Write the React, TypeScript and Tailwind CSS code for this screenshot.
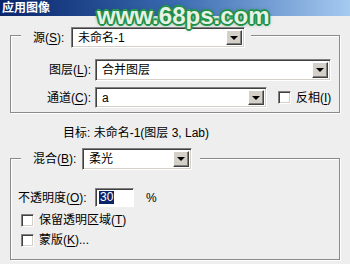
import React from "react";

const font = "font-['Liberation_Sans','Noto_Sans_CJK_SC',sans-serif]";

function U({ children }: { children: React.ReactNode }) {
  return <span className="underline underline-offset-[2px]">{children}</span>;
}

function DropButton() {
  return (
    <div className="w-[16px] h-full flex items-center justify-center bg-[#d4d0c8] border border-t-white border-l-white border-r-[#404040] border-b-[#404040] shadow-[inset_-1px_-1px_0_#808080]">
      <div className="w-0 h-0 border-l-[4px] border-r-[4px] border-t-[4px] border-l-transparent border-r-transparent border-t-black" />
    </div>
  );
}

function Select({ value, width, height = 21 }: { value: string; width: string; height?: number }) {
  return (
    <div
      className={`${width} flex items-stretch bg-white border border-t-[#808080] border-l-[#808080] border-r-white border-b-white shadow-[inset_1px_1px_0_#404040,inset_-1px_-1px_0_#d4d0c8] p-[2px]`}
      style={{ height }}
    >
      <div className="flex-1 flex items-center pl-[4px] text-[12px] text-black">{value}</div>
      <DropButton />
    </div>
  );
}

function Checkbox() {
  return (
    <div className="w-[13px] h-[13px] bg-white border border-t-[#808080] border-l-[#808080] border-r-white border-b-white shadow-[inset_1px_1px_0_#404040,inset_-1px_-1px_0_#d4d0c8]" />
  );
}

// etched group box border
const groupBox =
  "mx-[10px] w-[330px] border border-[#8a8a8a] shadow-[inset_1px_1px_0_#fff,1px_1px_0_#fff]";

export default function App() {
  return (
    <div className={`${font} relative w-[350px] h-[264px] overflow-hidden bg-[#eeeeee] text-[12px] text-black`}>
      {/* title bar */}
      <div className="h-[16px] bg-gradient-to-r from-[#0a246a] via-[#3a6ab0] to-[#a6caf0] pl-[2px] text-white font-bold text-[12px] leading-[16px]">
        应用图像
      </div>

      {/* source group */}
      <div className={`${groupBox} mt-[19px] h-[78px]`}>
        <div className="-mt-[9px] ml-[10px] w-fit flex items-center bg-[#eeeeee] pl-[12px] pr-[6px] h-[21px]">
          <span className="w-[38px]">
            源(<U>S</U>):
          </span>
          <Select value="未命名-1" width="w-[174px]" />
        </div>
        <div className="mt-[11px] flex items-center h-[22px]">
          <span className="w-[80px] text-right">
            图层(<U>L</U>):
          </span>
          <div className="ml-[4px]">
            <Select value="合并图层" width="w-[236px]" height={22} />
          </div>
        </div>
        <div className="mt-[6px] flex items-center h-[21px]">
          <span className="w-[80px] text-right">
            通道(<U>C</U>):
          </span>
          <div className="ml-[4px]">
            <Select value="a" width="w-[172px]" />
          </div>
          <div className="ml-[11px] flex items-center gap-[5px]">
            <Checkbox />
            <span>
              反相(<U>I</U>)
            </span>
          </div>
        </div>
      </div>

      {/* target */}
      <div className="mt-[13px] ml-[63px] h-[14px] leading-[14px]">目标: 未命名-1(图层 3, Lab)</div>

      {/* blending group */}
      <div className={`${groupBox} mt-[18px] h-[102px]`}>
        <div className="-mt-[11px] ml-[10px] w-fit flex items-center bg-[#eeeeee] pl-[12px] pr-[8px] h-[22px]">
          <span className="w-[49px]">
            混合(<U>B</U>):
          </span>
          <Select value="柔光" width="w-[110px]" height={22} />
        </div>
        <div className="mt-[18px] pl-[7px] flex items-center h-[19px]">
          <span className="w-[77px]">
            不透明度(<U>O</U>):
          </span>
          <div className="w-[39px] h-[19px] bg-white border border-t-[#808080] border-l-[#808080] border-r-white border-b-white shadow-[inset_1px_1px_0_#404040] flex items-center pl-[3px]">
            <span className="bg-[#0a246a] text-white leading-[13px] px-[1px]">30</span>
          </div>
          <span className="ml-[12px]">%</span>
        </div>
        <div className="mt-[6px] pl-[10px] flex items-center gap-[5px] h-[14px]">
          <Checkbox />
          <span>
            保留透明区域(<U>T</U>)
          </span>
        </div>
        <div className="mt-[6px] pl-[10px] flex items-center gap-[5px] h-[14px]">
          <Checkbox />
          <span>
            蒙版(<U>K</U>)...
          </span>
        </div>
      </div>

      {/* watermark */}
      <div className="absolute left-[97px] top-[2px] font-['Liberation_Sans',sans-serif] font-bold text-[24px] leading-[28px] text-[#e6f2e6] [text-shadow:0_0_1px_#1f8f48,1px_1px_0_#1f8f48,-1px_-1px_0_#1f8f48,1px_-1px_0_#1f8f48,-1px_1px_0_#1f8f48,2px_0_0_#2a9a52,-2px_0_0_#2a9a52,0_2px_0_#2a9a52,0_-2px_0_#2a9a52,0_0_4px_#0f6a32]">
        www.68ps.com
      </div>
    </div>
  );
}
